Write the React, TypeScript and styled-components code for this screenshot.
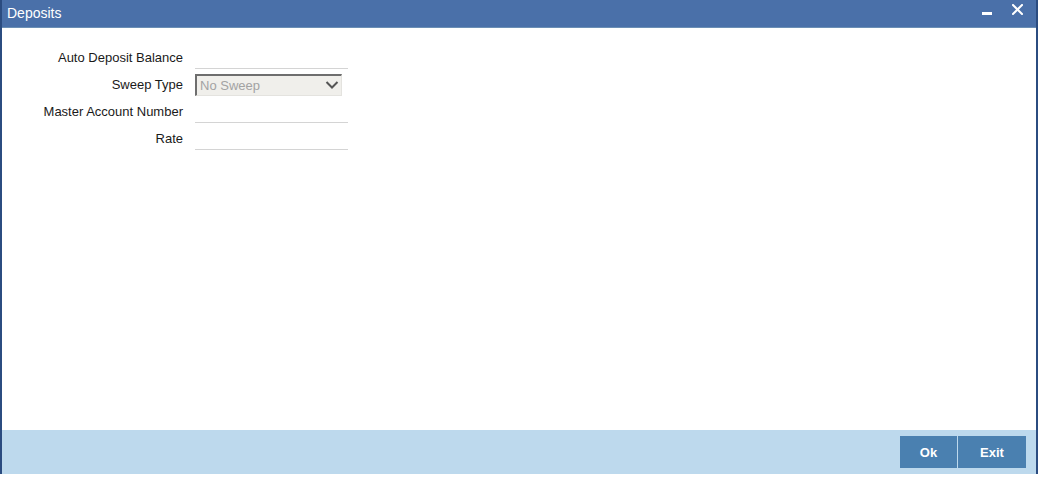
import React from "react";
import styled, { createGlobalStyle } from "styled-components";

const GlobalStyle = createGlobalStyle`
  html, body {
    margin: 0;
    padding: 0;
    background: #ffffff;
    font-family: "Liberation Sans", Arial, sans-serif;
  }
`;

interface Field {
  label: string;
  kind: "text" | "select";
  value?: string;
}

const fields: Field[] = [
  { label: "Auto Deposit Balance", kind: "text" },
  { label: "Sweep Type", kind: "select", value: "No Sweep" },
  { label: "Master Account Number", kind: "text" },
  { label: "Rate", kind: "text" },
];

const App: React.FC = () => {
  return (
    <>
      <GlobalStyle />
      <Window>
        <TitleBar>
          <Title>Deposits</Title>
          <TitleButtons>
            <MinButton aria-label="minimize">
              <svg width="10" height="3" viewBox="0 0 10 3">
                <rect x="0" y="0" width="10" height="3" fill="#ffffff" />
              </svg>
            </MinButton>
            <CloseButton aria-label="close">
              <svg width="11" height="11" viewBox="0 0 11 11">
                <path
                  d="M1 1 L10 10 M10 1 L1 10"
                  stroke="#ffffff"
                  strokeWidth="2"
                  strokeLinecap="square"
                />
              </svg>
            </CloseButton>
          </TitleButtons>
        </TitleBar>

        <Body>
          <Form>
            {fields.map((f) => (
              <Row key={f.label}>
                <Label>{f.label}</Label>
                {f.kind === "select" ? (
                  <Select>
                    <span>{f.value}</span>
                    <svg width="14" height="10" viewBox="0 0 14 10">
                      <path
                        d="M1.5 2 L7 7.5 L12.5 2"
                        stroke="#555555"
                        strokeWidth="2"
                        fill="none"
                      />
                    </svg>
                  </Select>
                ) : (
                  <TextInput type="text" />
                )}
              </Row>
            ))}
          </Form>
        </Body>

        <Footer>
          <ButtonGroup>
            <FooterButton>Ok</FooterButton>
            <FooterButton $wide>Exit</FooterButton>
          </ButtonGroup>
        </Footer>
      </Window>
    </>
  );
};

export default App;

const Window = styled.div`
  width: 1038px;
  height: 474px;
  box-sizing: border-box;
  display: flex;
  flex-direction: column;
  border-left: 2px solid #2b4c80;
  border-right: 2px solid #2b4c80;
`;

const TitleBar = styled.div`
  height: 28px;
  flex-shrink: 0;
  display: flex;
  align-items: center;
  justify-content: space-between;
  background-color: #4a70a9;
  border-bottom: 1px solid #6b8fb5;
  box-sizing: border-box;
  padding: 0 13px 0 5px;
`;

const Title = styled.div`
  color: #ffffff;
  font-size: 14px;
  padding-bottom: 2px;
`;

const TitleButtons = styled.div`
  display: flex;
  align-items: flex-start;
  align-self: stretch;
  gap: 20px;
  padding-top: 4px;
`;

const MinButton = styled.div`
  display: flex;
  margin-top: 8px;
`;

const CloseButton = styled.div`
  display: flex;
`;

const Body = styled.div`
  flex: 1;
  background: #ffffff;
`;

const Form = styled.div`
  display: flex;
  flex-direction: column;
  gap: 4px;
  padding-top: 18px;
`;

const Row = styled.div`
  display: flex;
  align-items: center;
  height: 23px;
`;

const Label = styled.div`
  width: 181px;
  text-align: right;
  font-size: 13px;
  color: #1a1a1a;
  padding-right: 12px;
`;

const TextInput = styled.input`
  width: 153px;
  height: 23px;
  box-sizing: border-box;
  border: none;
  border-bottom: 1px solid #d4d4d4;
  background: transparent;
  outline: none;
  font-family: inherit;
  font-size: 13px;
  padding: 0 4px;
`;

const Select = styled.div`
  width: 147px;
  height: 22px;
  box-sizing: border-box;
  display: flex;
  align-items: center;
  justify-content: space-between;
  background: #f0efeb;
  border-top: 2px solid #6e6e6e;
  border-left: 2px solid #6e6e6e;
  border-right: 1px solid #e4e3df;
  border-bottom: 1px solid #e4e3df;
  padding: 0 2px 0 3px;
  font-size: 13px;
  color: #a3a3a3;
`;

const Footer = styled.div`
  height: 44px;
  flex-shrink: 0;
  display: flex;
  align-items: center;
  justify-content: flex-end;
  background-color: #bdd9ed;
  padding-right: 10px;
`;

const ButtonGroup = styled.div`
  display: flex;
  gap: 1px;
`;

const FooterButton = styled.button<{ $wide?: boolean }>`
  width: ${(p) => (p.$wide ? "68px" : "57px")};
  height: 32px;
  border: none;
  background-color: #4a80b0;
  color: #ffffff;
  font-family: "Liberation Sans", Arial, sans-serif;
  font-weight: bold;
  font-size: 13px;
  padding: 0;
`;
